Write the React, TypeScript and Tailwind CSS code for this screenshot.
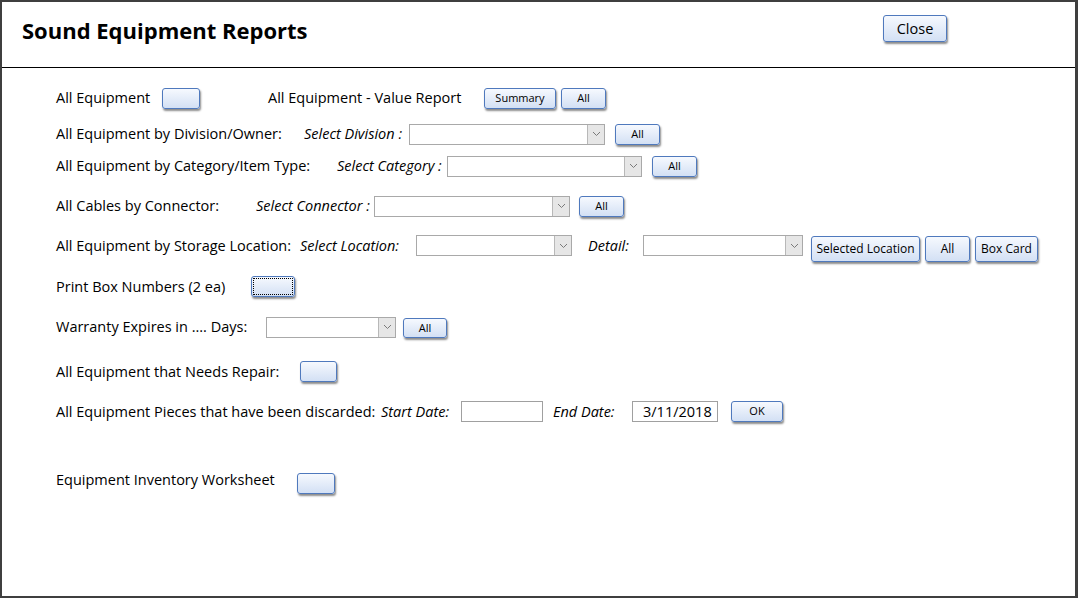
import React from "react";

const font = { fontFamily: '"Open Sans", "Noto Sans", "Liberation Sans", sans-serif' };

function Btn({
  w,
  h = "h-[21px]",
  text,
  size = "text-[11px]",
  focus = false,
  className = "",
}: {
  w: string;
  h?: string;
  text?: string;
  size?: string;
  focus?: boolean;
  className?: string;
}) {
  return (
    <button
      type="button"
      className={`${w} ${h} ${size} ${className} shrink-0 flex items-center justify-center rounded-[3px] border border-[#4f79bd] bg-linear-to-b from-[#f6f9fe] to-[#d3e0f4] text-black shadow-[1px_2px_2px_rgba(0,0,0,0.45)] ${
        focus ? "outline-1 outline-dotted outline-black -outline-offset-3" : ""
      }`}
    >
      {text}
    </button>
  );
}

function Select({ w }: { w: string }) {
  return (
    <div className={`${w} h-[21px] shrink-0 flex border border-[#a9a9a9] bg-white`}>
      <div className="flex-1" />
      <div className="w-[17px] flex items-center justify-center border-l border-[#b8b8b8] bg-[#e6e6e6]">
        <svg width="9" height="6" viewBox="0 0 9 6">
          <path d="M1 1 L4.5 4.5 L8 1" fill="none" stroke="#7a7a7a" strokeWidth="1" />
        </svg>
      </div>
    </div>
  );
}

function Label({ w, children, italic = false }: { w: string; children: React.ReactNode; italic?: boolean }) {
  return (
    <div className={`${w} shrink-0 whitespace-nowrap text-[14.5px] leading-[22px] text-black ${italic ? "italic" : ""}`}>
      {children}
    </div>
  );
}

export default function App() {
  return (
    <div
      style={font}
      className="w-[1078px] h-[598px] overflow-hidden bg-white border-t-2 border-l-2 border-r-[3px] border-b-2 border-[#3f3f3f] flex flex-col"
    >
      {/* Header */}
      <div className="h-[66px] shrink-0 flex items-start pt-[13px] pl-[20px] border-b border-black">
        <div className="w-[861px] text-[22px] font-bold leading-[30px] text-black">Sound Equipment Reports</div>
        <Btn w="w-[64px]" h="h-[27px]" text="Close" size="text-[14.5px]" />
      </div>

      {/* Body */}
      <div className="flex flex-col pl-[54px]">
        <div className="mt-[19px] h-[22px] flex items-center">
          <Label w="w-[106px]">All Equipment</Label>
          <Btn w="w-[38px]" />
          <div className="w-[68px]" />
          <Label w="w-[216px]">All Equipment - Value Report</Label>
          <Btn w="w-[72px]" text="Summary" />
          <Btn w="w-[45px]" text="All" className="ml-[5px]" />
        </div>

        <div className="mt-[14px] h-[22px] flex items-center">
          <Label w="w-[248px]">All Equipment by Division/Owner:</Label>
          <Label w="w-[105px]" italic>Select Division :</Label>
          <Select w="w-[196px]" />
          <Btn w="w-[45px]" text="All" className="ml-[10px]" />
        </div>

        <div className="mt-[10px] h-[22px] flex items-center">
          <Label w="w-[281px]">All Equipment by Category/Item Type:</Label>
          <Label w="w-[110px]" italic>Select Category :</Label>
          <Select w="w-[195px]" />
          <Btn w="w-[45px]" text="All" className="ml-[10px]" />
        </div>

        <div className="mt-[18px] h-[22px] flex items-center">
          <Label w="w-[200px]">All Cables by Connector:</Label>
          <Label w="w-[118px]" italic>Select Connector :</Label>
          <Select w="w-[196px]" />
          <Btn w="w-[45px]" text="All" className="ml-[9px]" />
        </div>

        <div className="mt-[18px] flex items-start">
          <Label w="w-[244px]">All Equipment by Storage Location:</Label>
          <Label w="w-[116px]" italic>Select Location:</Label>
          <Select w="w-[156px]" />
          <Label w="w-[55px] ml-[16px]" italic>Detail:</Label>
          <Select w="w-[160px]" />
          <Btn w="w-[109px]" h="h-[26px]" text="Selected Location" size="text-[12px]" className="ml-[8px] mt-px" />
          <Btn w="w-[45px]" h="h-[26px]" text="All" size="text-[12px]" className="ml-[5px] mt-px" />
          <Btn w="w-[63px]" h="h-[26px]" text="Box Card" size="text-[12px]" className="ml-[5px] mt-px" />
        </div>

        <div className="mt-[14px] h-[21px] flex items-center">
          <Label w="w-[195px]">Print Box Numbers (2 ea)</Label>
          <Btn w="w-[44px]" focus />
        </div>

        <div className="mt-[19px] h-[22px] flex items-center">
          <Label w="w-[210px]">Warranty Expires in .... Days:</Label>
          <Select w="w-[130px]" />
          <Btn w="w-[44px]" h="h-[20px]" text="All" className="ml-[7px] mt-[2px]" />
        </div>

        <div className="mt-[23px] h-[21px] flex items-center">
          <Label w="w-[244px]">All Equipment that Needs Repair:</Label>
          <Btn w="w-[37px]" />
        </div>

        <div className="mt-[19px] h-[21px] flex items-center">
          <Label w="w-[325px]">All Equipment Pieces that have been discarded:</Label>
          <Label w="w-[80px]" italic>Start Date:</Label>
          <div className="w-[82px] h-[21px] shrink-0 border border-[#a0a0a0] bg-white" />
          <Label w="w-[79px] ml-[10px]" italic>End Date:</Label>
          <div className="w-[86px] h-[21px] shrink-0 border border-[#a0a0a0] bg-white px-[10px] text-[14.5px] leading-[19px] text-black">
            3/11/2018
          </div>
          <Btn w="w-[52px]" text="OK" className="ml-[13px]" />
        </div>

        <div className="mt-[51px] h-[21px] flex items-center">
          <Label w="w-[241px]">
            <span className="relative top-[-4px]">Equipment Inventory Worksheet</span>
          </Label>
          <Btn w="w-[38px]" />
        </div>
      </div>
    </div>
  );
}
